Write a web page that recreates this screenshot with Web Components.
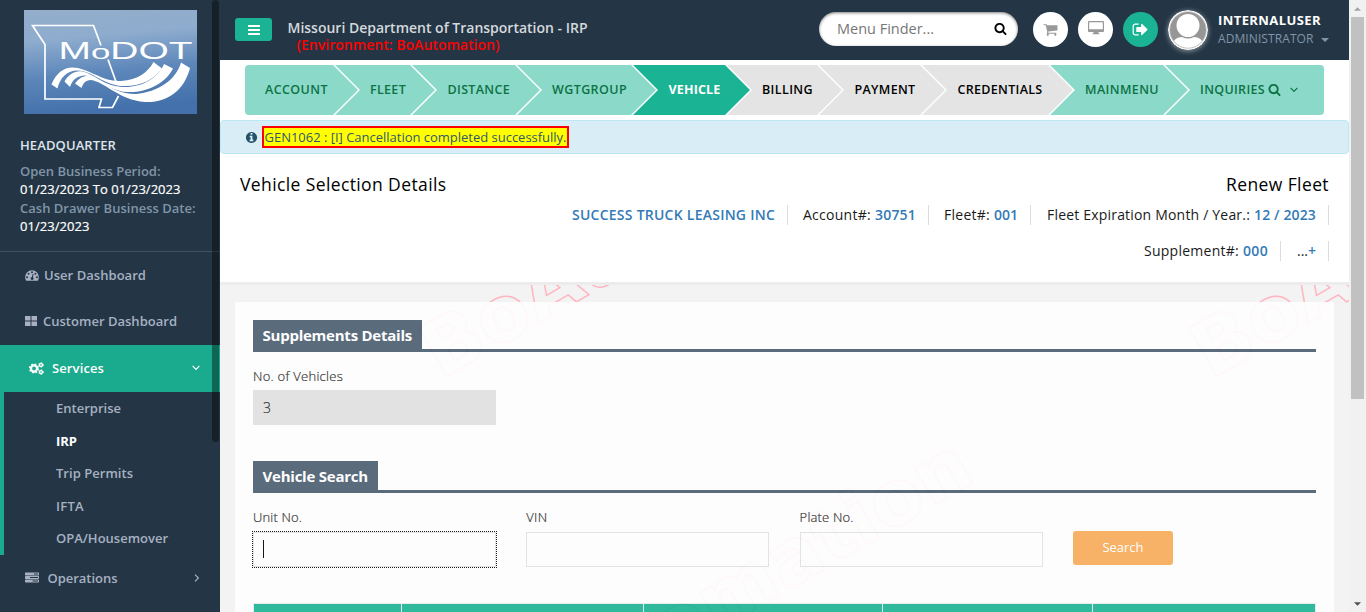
<!DOCTYPE html>
<html lang="en">
<head>
<meta charset="utf-8">
<title>Vehicle Selection Details</title>
<style>
html,body{margin:0;height:100%;overflow:hidden;background:#f3f3f4}
body{font-family:"Open Sans","Noto Sans",sans-serif;font-size:13px}
</style>
</head>
<body>
<irp-app></irp-app>
<script>
function define(name, html, setup) {
  const tpl = document.createElement('template');
  tpl.innerHTML = html;
  customElements.define(name, class extends HTMLElement {
    constructor() {
      super();
      this.attachShadow({ mode: 'open' }).appendChild(tpl.content.cloneNode(true));
    }
    connectedCallback() { if (setup) setup(this, this.shadowRoot); }
  });
}

/* Text run that is tracked to an exact width. */
define('fit-text', `<style>:host{display:inline-block;white-space:nowrap;flex:none}span{display:inline-block}</style><span><slot></slot></span>`, (el, root) => {
  const s = root.querySelector('span');
  const w = parseFloat(el.getAttribute('w'));
  const n = el.textContent.length;
  const natural = s.getBoundingClientRect().width;
  if (w && natural) s.style.letterSpacing = ((w - natural) / n).toFixed(3) + 'px';
  if (w) el.style.width = w + 'px';
});

const ICONS = {
  bars: 'M1664 1344v128q0 26-19 45t-45 19h-1408q-26 0-45-19t-19-45v-128q0-26 19-45t45-19h1408q26 0 45 19t19 45zm0-512v128q0 26-19 45t-45 19h-1408q-26 0-45-19t-19-45v-128q0-26 19-45t45-19h1408q26 0 45 19t19 45zm0-512v128q0 26-19 45t-45 19h-1408q-26 0-45-19t-19-45v-128q0-26 19-45t45-19h1408q26 0 45 19t19 45z',
  search: 'M1216 832q0-185-131.5-316.5t-316.5-131.5-316.5 131.5-131.5 316.5 131.5 316.5 316.5 131.5 316.5-131.5 131.5-316.5zm512 832q0 52-38 90t-90 38q-54 0-90-38l-343-342q-179 124-399 124-143 0-273.5-55.5t-225-150-150-225-55.5-273.5 55.5-273.5 150-225 225-150 273.5-55.5 273.5 55.5 225 150 150 225 55.5 273.5q0 220-124 399l343 343q37 37 37 90z',
  cart: 'M704 1536q0 52-38 90t-90 38-90-38-38-90 38-90 90-38 90 38 38 90zm896 0q0 52-38 90t-90 38-90-38-38-90 38-90 90-38 90 38 38 90zm128-1088v512q0 24-16.5 42.5t-40.5 21.5l-1044 122q13 60 13 70 0 16-24 64h920q26 0 45 19t19 45-19 45-45 19h-1024q-26 0-45-19t-19-45q0-11 8-31.5t16-36 21.5-40 15.5-29.5l-177-823h-204q-26 0-45-19t-19-45 19-45 45-19h256q16 0 28.5 6.5t19.5 15.5 13 24.5 8 26 5.5 29.5 4.5 26h1201q26 0 45 19t19 45z',
  info: 'M1152 1376v-160q0-14-9-23t-23-9h-96v-512q0-14-9-23t-23-9h-320q-14 0-23 9t-9 23v160q0 14 9 23t23 9h96v320h-96q-14 0-23 9t-9 23v160q0 14 9 23t23 9h448q14 0 23-9t9-23zm-128-896v-160q0-14-9-23t-23-9h-192q-14 0-23 9t-9 23v160q0 14 9 23t23 9h192q14 0 23-9t9-23zm640 416q0 209-103 385.5t-279.5 279.5-385.5 103-385.5-103-279.5-279.5-103-385.5 103-385.5 279.5-279.5 385.5-103 385.5 103 279.5 279.5 103 385.5z',
  signout: 'M704 1440q0 4 1 20t.5 26.5-3 23.5-10 19.5-20.5 6.5h-320q-119 0-203.5-84.5t-84.5-203.5v-704q0-119 84.5-203.5t203.5-84.5h320q13 0 22.5 9.5t9.5 22.5q0 4 1 20t.5 26.5-3 23.5-10 19.5-20.5 6.5h-320q-66 0-113 47t-47 113v704q0 66 47 113t113 47h312l11.5 1 11.5 3 8 5.5 7 9 2 13.5zm928-544q0 26-19 45l-544 544q-19 19-45 19t-45-19-19-45v-288h-448q-26 0-45-19t-19-45v-384q0-26 19-45t45-19h448v-288q0-26 19-45t45-19 45 19l544 544q19 19 19 45z'
};
const DRAWN = {
  desktop: ['0 0 16 14', '<path fill-rule="evenodd" d="M1 0h14a1 1 0 0 1 1 1v9a1 1 0 0 1-1 1h-4.500v1.200h.9v1h-6.800v-1h.9V11H1a1 1 0 0 1-1-1V1a1 1 0 0 1 1-1zM1.200 1.200v7h13.600v-7z"/>'],
  gauge: ['0 0 14 11', '<path fill-rule="evenodd" d="M7 .3A6.900 6.900 0 0 0 .1 7.100a6.700 6.700 0 0 0 1.100 3.600h11.600a6.700 6.700 0 0 0 1.100-3.600A6.900 6.900 0 0 0 7 .3zM2 6.200a1 1 0 1 1 0 2 1 1 0 0 1 0-2zM3.600 2.700a1 1 0 1 1 0 2 1 1 0 0 1 0-2zM7 1.300a1 1 0 1 1 0 2 1 1 0 0 1 0-2zM10.400 2.700a1 1 0 1 1 0 2 1 1 0 0 1 0-2zM12 6.200a1 1 0 1 1 0 2 1 1 0 0 1 0-2zM7.700 4l.9.200-.7 3a1.500 1.500 0 1 1-1-.200z"/>'],
  tiles: ['0 0 12 10', '<path d="M0 0h5.500v4.500H0zM6.500 0H12v4.500H6.500zM0 5.500h5.500V10H0zM6.500 5.500H12V10H6.500z"/>'],
  gears: ['0 0 15 13', '<g fill="none" stroke="currentColor"><circle cx="5" cy="6.500" r="3.050" stroke-width="2.300"/><circle cx="5" cy="6.500" r="4.400" stroke-width="1.400" stroke-dasharray="1.800 1.656"/><circle cx="12" cy="2.900" r="1.500" stroke-width="1.400"/><circle cx="12" cy="2.900" r="2.300" stroke-width="1" stroke-dasharray="1.200 1.209"/><circle cx="12" cy="10.100" r="1.500" stroke-width="1.400"/><circle cx="12" cy="10.100" r="2.300" stroke-width="1" stroke-dasharray="1.200 1.209"/></g>'],
  server: ['0 0 14 11', '<path fill-rule="evenodd" d="M.6.500h12.800l.6.600v1.800l-.6.600H.6L0 2.900V1.100zM.6 4h12.800l.6.600v1.800l-.6.600H.6L0 6.400V4.600zM.6 7.500h12.800l.6.600v1.800l-.6.600H.6L0 9.900V8.100zM9 1.600v.8h4v-.8zM5 5.100v.8h8v-.8zM7.500 8.600v.8H13v-.8z"/>'],
  down: ['0 0 8 6', '<path d="M.6.900 4 4.300 7.400.9" fill="none" stroke="currentColor" stroke-width="1.200"/>'],
  right: ['0 0 6 8', '<path d="M1 .6 4.400 4 1 7.400" fill="none" stroke="currentColor" stroke-width="1.200"/>'],
  caret: ['0 0 8 4', '<path d="M0 0h8L4 4z"/>']
};
define('ui-icon', `<style>:host{display:inline-flex;flex:none}svg{display:block;fill:currentColor}</style>`, (el, root) => {
  const n = el.getAttribute('name');
  const [box, body] = DRAWN[n] || ['0 0 1792 1792', `<path d="${ICONS[n]}"/>`];
  root.innerHTML += `<svg viewBox="${box}" width="${el.getAttribute('w')}" height="${el.getAttribute('h') || el.getAttribute('w')}">${body}</svg>`;
});

define('modot-logo', `<style>:host{display:block;width:173px;height:104px}svg{display:block}text{font-family:"Liberation Sans",sans-serif}</style>
<svg width="173" height="104" viewBox="0 0 173 104">
<defs><linearGradient id="sky" x1="0" y1="0" x2=".15" y2="1"><stop offset="0" stop-color="#94aecb"/><stop offset=".3" stop-color="#8eacce"/><stop offset=".65" stop-color="#5d87ba"/><stop offset="1" stop-color="#4471ab"/></linearGradient></defs>
<rect width="173" height="104" fill="url(#sky)"/>
<path d="M77 35.500 69.500 15.500H8.500L21 34.500V89H77.500l-2.500 8.500h13.500L94.500 86M84 49.500l9 25" fill="none" stroke="#fff" stroke-width="1.700"/>
<text x="34.500" y="48.500" font-size="23.500" fill="#fff" textLength="134" lengthAdjust="spacingAndGlyphs">M<tspan font-size="21">o</tspan>DOT</text>
<g fill="#fff">
<path d="M27.500 74.500C33 61 42 55.500 54 58 68 61 80 72 97 71 114 70 124 62 129.500 52L138 58.500C129 71 114 77 98 76 80 75 68 61 54 60.500 43 60 36 68 33.500 78.500z"/>
<path d="M40.500 71.500C46 62 55 59 63 63 76 69 83 76 98 77 118 78 134 68 140 54L149 58.500C141 74 122 83 103 82 83 81 71 65 60 65.500 52 66 48 71 46 77z"/>
<path d="M51 73.500C57 65 65 64 73 69 86 78 97 84 112 84 134 82 152 70 157 52.500L166 58C160 81 143 93 121 92 95 90 81 72 67 70 61 70 59 74 57.500 78z"/>
</g></svg>`);

define('side-item', `<style>
:host{display:flex;align-items:center;height:46px;box-sizing:border-box;padding:0 20px 0 25px;color:#a7b1c2;font-weight:600;font-size:13px}
:host([active]){background:#1aaa8d;color:#fff;height:47px;padding:0 20px 1px 29px}
.txt{margin-left:var(--gap,6px);flex:1}
</style><slot name="icon"></slot><div class="txt"><slot></slot></div><slot name="end"></slot>`);

define('side-bar', `<style>
:host{display:block;position:relative;width:220px;height:612px;background:#243645;overflow:hidden;flex:none}
modot-logo{margin:10px 0 0 24px}
.info{padding:22px 0 0 20px;height:115px;font-weight:600;line-height:18px}
.info div{display:flex}
.hq{color:#dfe4ed;height:18px;margin-bottom:8px}
.dim{color:#8095a8}.val{color:#fff;font-weight:400;height:19px}
.val fit-text{-webkit-text-stroke:.2px #fff}
hr{border:0;height:1px;background:#3d5163;margin:0}
nav{display:block}
.sub{border-left:4px solid #1aaa8d;padding-left:52px;color:#a7b1c2;font-weight:600}
.sub div{height:32.500px;line-height:32px}
.sub .on{color:#fff;font-weight:700}
.thumb{position:absolute;right:1px;top:0;width:7px;height:442px;background:rgba(0,0,0,.4);border-radius:4px}
</style>
<modot-logo></modot-logo>
<div class="info">
<div class="hq"><fit-text w="96">HEADQUARTER</fit-text></div>
<div class="dim"><fit-text w="140.500">Open Business Period:</fit-text></div>
<div class="val"><fit-text w="160.500">01/23/2023 To 01/23/2023</fit-text></div>
<div class="dim"><fit-text w="175.500">Cash Drawer Business Date:</fit-text></div>
<div class="val"><fit-text w="69.500">01/23/2023</fit-text></div>
</div>
<hr>
<nav>
<side-item><ui-icon slot="icon" name="gauge" w="14" h="11"></ui-icon><fit-text w="102" style="margin-left:-1px">User Dashboard</fit-text></side-item>
<side-item><ui-icon slot="icon" name="tiles" w="12" h="10"></ui-icon><fit-text w="134">Customer Dashboard</fit-text></side-item>
<side-item active style="--gap:8px;margin-top:1px"><ui-icon slot="icon" name="gears" w="15" h="13"></ui-icon><fit-text w="52">Services</fit-text><ui-icon slot="end" name="down" w="8" h="6"></ui-icon></side-item>
<div class="sub">
<div><fit-text w="65">Enterprise</fit-text></div>
<div class="on"><fit-text w="21">IRP</fit-text></div>
<div><fit-text w="77">Trip Permits</fit-text></div>
<div><fit-text w="28">IFTA</fit-text></div>
<div><fit-text w="112">OPA/Housemover</fit-text></div>
</div>
<side-item style="--gap:8.500px"><ui-icon slot="icon" name="server" w="14" h="11"></ui-icon><fit-text w="70">Operations</fit-text><ui-icon slot="end" name="right" w="6" h="8"></ui-icon></side-item>
</nav>
<div class="thumb"></div>`);

define('round-button', `<style>
:host{display:flex;align-items:center;justify-content:center;width:35px;height:35px;border-radius:50%;background:#fff;color:#999;margin-right:10px;flex:none}
:host([primary]){background:#1ab394;color:#fff}</style><slot></slot>`);

define('top-bar', `<style>
:host{display:flex;height:60px;background:#243645;box-sizing:border-box;padding:0 20px 0 15px;align-items:flex-start}
.menu{width:37px;height:23px;background:#1ab394;border-radius:3px;margin-top:18px;display:flex;align-items:center;justify-content:center;color:#fff}
.title{margin:19px 0 0 15.500px;font-size:14px;font-weight:600;color:#d5d9dd;line-height:17px;flex:1}
.title div{display:flex}
.env{color:red;padding-left:9px}
.find{display:flex;align-items:center;width:199px;height:34px;box-sizing:border-box;border-radius:17px;background:#fff;box-shadow:inset 0 1px 3px rgba(0,0,0,.5);padding:0 11px 1px 18px;margin:12px 15px 0 0;justify-content:space-between;color:#777;font-size:14.500px}
.find ui-icon{color:#000}
.rounds{display:flex;margin-top:12px}
.avatar{width:40px;height:40px;margin-top:10px;border-radius:50%;box-shadow:0 1px 5px rgba(255,255,255,.5);flex:none}
.user{margin:11px 0 0 10px;width:111px;line-height:18px}
.user div{display:flex;align-items:center}
.name{color:#fff;font-weight:700;font-size:13px}
.role{color:#8095a8;font-size:12px;justify-content:space-between;height:19px}
.role ui-icon{margin-top:3px}
</style>
<div class="menu"><ui-icon name="bars" w="14"></ui-icon></div>
<div class="title"><div><fit-text w="300">Missouri Department of Transportation - IRP</fit-text></div><div class="env"><fit-text w="203">(Environment: BoAutomation)</fit-text></div></div>
<div class="find"><fit-text w="97">Menu Finder...</fit-text><ui-icon name="search" w="13"></ui-icon></div>
<div class="rounds">
<round-button><ui-icon name="cart" w="15"></ui-icon></round-button>
<round-button><ui-icon name="desktop" w="16" h="14" style="margin-top:-3px"></ui-icon></round-button>
<round-button primary><ui-icon name="signout" w="17"></ui-icon></round-button></div>
<svg class="avatar" viewBox="0 0 40 40"><defs><clipPath id="c"><circle cx="20" cy="20" r="18"/></clipPath></defs><circle cx="20" cy="20" r="20" fill="#fff"/><g clip-path="url(#c)"><rect width="40" height="40" fill="#969696"/><circle cx="20" cy="15.500" r="11.500" fill="#fff"/><path d="M3 40C4 30 9 27 14 27q6 3 12 0c5 0 10 3 11 13z" fill="#fff"/></g><circle cx="20" cy="20" r="18.300" fill="none" stroke="#aaa" stroke-width=".6"/></svg>
<div class="user"><div class="name"><fit-text w="103">INTERNALUSER</fit-text></div><div class="role"><fit-text w="95.500">ADMINISTRATOR</fit-text><ui-icon name="caret" w="8" h="4"></ui-icon></div></div>`);

define('wizard-step', `<style>
:host{display:flex;align-items:center;box-sizing:border-box;width:calc(var(--w)*1px + 25px);height:50px;margin-right:-25px;padding:0 0 1px 35px;background:#8bd9c9;color:#0d7345;font-weight:600;font-size:12.500px;flex:none;
clip-path:polygon(0 0,calc(100% - 25px) 0,100% 50%,calc(100% - 25px) 100%,0 100%,25px 50%)}
:host([first]){padding-left:20px;clip-path:polygon(0 0,calc(100% - 25px) 0,100% 50%,calc(100% - 25px) 100%,0 100%);border-radius:4px 0 0 4px}
:host([last]){width:calc(var(--w)*1px);margin-right:0;clip-path:polygon(0 0,100% 0,100% 100%,0 100%,25px 50%);border-radius:0 4px 4px 0}
:host([current]){background:#1ab394;color:#fff;font-weight:700}
:host([todo]){background:#e4e4e4;color:#000}
</style><slot></slot>`);

define('wizard-bar', `<style>:host{display:flex;gap:2px;padding:5px 25px;background:#fff}</style>
<wizard-step first style="--w:88"><fit-text w="63">ACCOUNT</fit-text></wizard-step>
<wizard-step style="--w:75"><fit-text w="36">FLEET</fit-text></wizard-step>
<wizard-step style="--w:103"><fit-text w="62.500" style="margin-left:.5px">DISTANCE</fit-text></wizard-step>
<wizard-step style="--w:114"><fit-text w="75">WGTGROUP</fit-text></wizard-step>
<wizard-step current style="--w:92"><fit-text w="52" style="margin-left:.5px">VEHICLE</fit-text></wizard-step>
<wizard-step todo style="--w:90"><fit-text w="51">BILLING</fit-text></wizard-step>
<wizard-step todo style="--w:101"><fit-text w="61" style="margin-left:.5px">PAYMENT</fit-text></wizard-step>
<wizard-step todo style="--w:126"><fit-text w="85" style="margin-left:.5px">CREDENTIALS</fit-text></wizard-step>
<wizard-step style="--w:113"><fit-text w="74">MAINMENU</fit-text></wizard-step>
<wizard-step last style="--w:159"><fit-text w="65">INQUIRIES</fit-text><ui-icon name="search" w="13" style="margin-left:3px"></ui-icon><ui-icon name="down" w="8" h="6" style="margin-left:9px"></ui-icon></wizard-step>`);

define('status-alert', `<style>
:host{display:flex;height:34px;box-sizing:border-box;background:#d9edf7;border:1px solid #bce8f1;border-radius:4px;align-items:center;padding-left:24px;color:#245269}
mark{box-sizing:border-box;width:307px;height:22px;border:2px solid red;background:#ff0;margin-left:4px;padding-left:.5px;line-height:18px;color:#31586f;font-size:13px;display:flex}
</style><ui-icon name="info" w="13"></ui-icon><mark><fit-text w="302">GEN1062 : [I] Cancellation completed successfully.</fit-text></mark>`);

define('meta-item', `<style>
:host{display:flex;height:20px;line-height:20px;border-right:1px solid #dcdcdc;padding-right:12px;margin-left:15px;color:#1a1a1a;font-size:14px;flex:none}
:host(:last-child){margin-left:16px}
::slotted(b){color:#337ab7;font-weight:600;margin-left:4px}
</style><slot></slot>`);

define('page-heading', `<style>
:host{display:block;height:131px;box-sizing:border-box;background:#fff;border-bottom:3px solid #ececec;padding:20px 20px 0 20px;color:#000}
.titles{display:flex;justify-content:space-between;font-size:17.500px;font-weight:500;height:21px;line-height:20px}
.row{display:flex;justify-content:flex-end;margin-top:10px;height:26px}
.row b{font-weight:600;color:#337ab7}
</style>
<div class="titles"><fit-text w="206.500">Vehicle Selection Details</fit-text><fit-text w="103">Renew Fleet</fit-text></div>
<div class="row">
<meta-item><b><fit-text w="203">SUCCESS TRUCK LEASING INC</fit-text></b></meta-item>
<meta-item><fit-text w="68">Account#:</fit-text><b><fit-text w="41">30751</fit-text></b></meta-item>
<meta-item><fit-text w="46">Fleet#:</fit-text><b><fit-text w="24">001</fit-text></b></meta-item>
<meta-item><fit-text w="203">Fleet Expiration Month / Year.:</fit-text><b><fit-text w="62">12 / 2023</fit-text></b></meta-item></div>
<div class="row">
<meta-item><fit-text w="95">Supplement#:</fit-text><b><fit-text w="25">000</fit-text></b></meta-item>
<meta-item><fit-text w="11">...</fit-text><b style="margin-left:0"><fit-text w="8">+</fit-text></b></meta-item></div>`);

define('section-title', `<style>
:host{display:flex;height:32px;box-sizing:border-box;border-bottom:3px solid #4a5d70}
div{background:#4a5d70;color:#fff;font-weight:700;font-size:15px;height:29px;padding:1px 10px 0 9.500px;line-height:28px;box-sizing:border-box}
</style><div><slot></slot></div>`);

define('form-field', `<style>
:host{display:block;width:243.500px;flex:none;color:#222}
.label{height:18px;line-height:var(--label-line,18px);font-weight:300;font-size:13px;-webkit-text-stroke:.2px #222}
.box{box-sizing:border-box;width:243px;height:35px;margin-top:5px;border:1px solid #e0e2e4;background:#fff;display:flex;align-items:center;padding-left:9px;font-size:14px;font-weight:300}
:host([readonly]) .box{background:#e1e1e1;border-color:#e1e1e1;-webkit-text-stroke:.2px #222}
:host([focused]) .box{outline:1px dotted #000;padding-bottom:1px}
.caret{display:none;width:1px;height:18px;background:#000}
:host([focused]) .caret{display:block}
</style><div class="label"><slot name="label"></slot></div><div class="box"><i class="caret"></i><slot></slot></div>`);

define('water-mark', `<style>:host{position:absolute;inset:0}svg{display:block}text{font:700 77px "DejaVu Sans",sans-serif;fill:none;stroke:#ffb6c1;stroke-width:1.500}</style>
<svg width="1129" height="327" viewBox="220 285 1129 327">
<text transform="translate(441 380) rotate(-30)">BoAutomation</text>
<text transform="translate(1211 380) rotate(-30)">BoAutomation</text>
<text transform="translate(442 790) rotate(-30)">BoAutomation</text></svg>`);

define('data-head', `<style>
:host{display:grid;grid-template-columns:147px 241px 238px 209px 222px;gap:1px;background:#e7eaec;border:1px solid #e7eaec;border-bottom:0;height:60px}
div{background:#1ab394}
</style><div></div><div></div><div></div><div></div><div></div>`);

define('vehicle-panel', `<style>
:host{display:block;position:relative;height:327px;overflow:hidden;background:#f3f3f3;padding:17px 15px 0;box-sizing:border-box}
.panel{position:relative;background:#fff;opacity:.9;height:400px;padding:18px 18px 0;box-sizing:border-box}
.panel>form-field{margin-top:15px}
.second{margin-top:36px}
.fields{display:flex;gap:29.800px;margin-top:16px;--label-line:16px}
.btn{width:100px;height:34px;margin-top:22px;border-radius:3px;background:#f8ac59;color:#fff;display:flex;align-items:center;justify-content:center;font-size:13px;padding-bottom:2px;box-sizing:border-box}
data-head{margin-top:36px}
</style>
<water-mark></water-mark>
<div class="panel">
<section-title><fit-text w="149.500">Supplements Details</fit-text></section-title>
<form-field readonly><fit-text slot="label" w="90">No. of Vehicles</fit-text><fit-text w="8">3</fit-text></form-field>
<section-title class="second"><fit-text w="105.500">Vehicle Search</fit-text></section-title>
<div class="fields">
<form-field focused><fit-text slot="label" w="49">Unit No.</fit-text></form-field>
<form-field><fit-text slot="label" w="21">VIN</fit-text></form-field>
<form-field><fit-text slot="label" w="54">Plate No.</fit-text></form-field>
<div class="btn"><fit-text w="41">Search</fit-text></div></div>
<data-head></data-head>
</div>`);

define('page-scrollbar', `<style>
:host{display:flex;flex-direction:column;align-items:center;width:17px;height:612px;background:#f1f1f1;flex:none}
.a{height:17px;display:flex;align-items:center;color:#a3a3a3}
.t{width:13px;height:382px;background:#c1c1c1;margin-bottom:auto}
.b{color:#505050;height:17px;display:flex;align-items:center}
</style><div class="a"><ui-icon name="caret" w="7" h="4" style="transform:rotate(180deg)"></ui-icon></div><div class="t"></div><div class="b"><ui-icon name="caret" w="7" h="4"></ui-icon></div>`);

define('irp-app', `<style>
:host{display:flex;width:1366px;height:612px;overflow:hidden}
main{width:1129px;flex:none;background:#fff}
</style>
<side-bar></side-bar>
<main><top-bar></top-bar><wizard-bar></wizard-bar><status-alert></status-alert><page-heading></page-heading><vehicle-panel></vehicle-panel></main>
<page-scrollbar></page-scrollbar>`);
</script>
</body>
</html>
